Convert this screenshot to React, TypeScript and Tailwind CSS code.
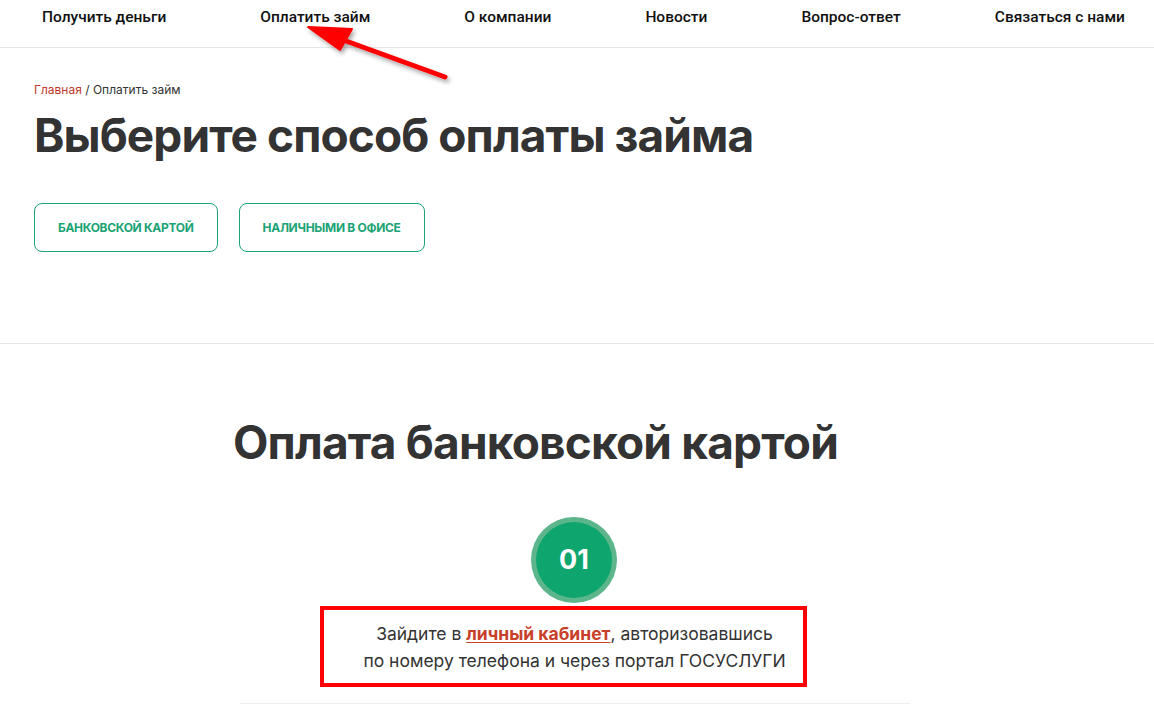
import { ReactNode } from "react";

const navItems = [
    "Получить деньги",
    "Оплатить займ",
    "О компании",
    "Новости",
    "Вопрос-ответ",
    "Связаться с нами",
];

function PayButton({ children }: { children: ReactNode }) {
    return (
        <button className="h-[49px] px-[23px] rounded-lg border border-[#1aa374] text-[#1aa374] text-[12px] font-bold uppercase tracking-tight font-['Inter',sans-serif]">
            {children}
        </button>
    );
}

export default function App() {
    return (
        <div className="relative w-[1154px] h-[705px] overflow-hidden bg-white text-[#333] font-['Roboto',sans-serif]">
            {/* шапка */}
            <nav className="h-[48px] border-b border-[#e6e6e6] flex items-start pt-[6px] pl-[42px] gap-[94px] text-[15.5px] font-medium text-[#111]">
                {navItems.map((item) => (
                    <a key={item} href="#">{item}</a>
                ))}
            </nav>

            {/* стрелка-пометка */}
            <svg className="absolute left-[300px] top-[20px]" width="160" height="70" viewBox="0 0 160 70">
                <defs>
                    <filter id="sh" x="-20%" y="-20%" width="140%" height="160%">
                        <feDropShadow dx="2" dy="3" stdDeviation="2" floodColor="#000" floodOpacity="0.35" />
                    </filter>
                </defs>
                <g filter="url(#sh)" fill="#f00" stroke="#f00" strokeLinejoin="round">
                    <line x1="145" y1="57" x2="35" y2="17" strokeWidth="5" strokeLinecap="round" />
                    <polygon points="8,7 52,9 40,30" strokeWidth="2" />
                </g>
            </svg>

            <div className="px-[34px]">
                <div className="pt-[33px] text-[12px] text-[#333] font-['Inter',sans-serif]">
                    <a href="#" className="text-[#c0392b]">Главная</a> / Оплатить займ
                </div>
                <h1 className="mt-[8px] text-[46px] leading-[56px] font-bold tracking-[-0.02em] text-[#333] font-['Inter',sans-serif]">
                    Выберите способ оплаты займа
                </h1>
                <div className="mt-[40px] flex gap-[21px]">
                    <PayButton>Банковской картой</PayButton>
                    <PayButton>Наличными в офисе</PayButton>
                </div>
            </div>

            <div className="mt-[91px] border-t border-[#e6e6e6]" />

            <div className="flex flex-col">
                <h2 className="mt-[70px] pl-[233px] text-[46px] leading-[56px] font-bold tracking-[-0.018em] text-[#333] font-['Inter',sans-serif]">
                    Оплата банковской картой
                </h2>
                <div className="mt-[47px] flex justify-center pr-[6px]">
                    <div className="w-[86px] h-[86px] rounded-full bg-[#5db58c] flex items-center justify-center">
                        <div className="w-[76px] h-[76px] rounded-full bg-[#0ea56e] flex items-center justify-center text-white text-[27px] font-bold font-['Inter',sans-serif]">
                            01
                        </div>
                    </div>
                </div>
                <div className="mt-[3px] ml-[320px] w-[487px] h-[81px] border-[4px] border-[#f00] pl-[22px] flex flex-col items-center justify-center text-[17.5px] leading-[27px] text-[#333] font-['Inter',sans-serif]">
                    <p>
                        Зайдите в <a href="#" className="font-bold text-[#c8402a] underline underline-offset-2">личный кабинет</a>, авторизовавшись
                    </p>
                    <p>по номеру телефона и через портал ГОСУСЛУГИ</p>
                </div>
                <div className="mt-[16px] ml-[240px] w-[670px] border-t border-[#eee]" />
            </div>
        </div>
    );
}
